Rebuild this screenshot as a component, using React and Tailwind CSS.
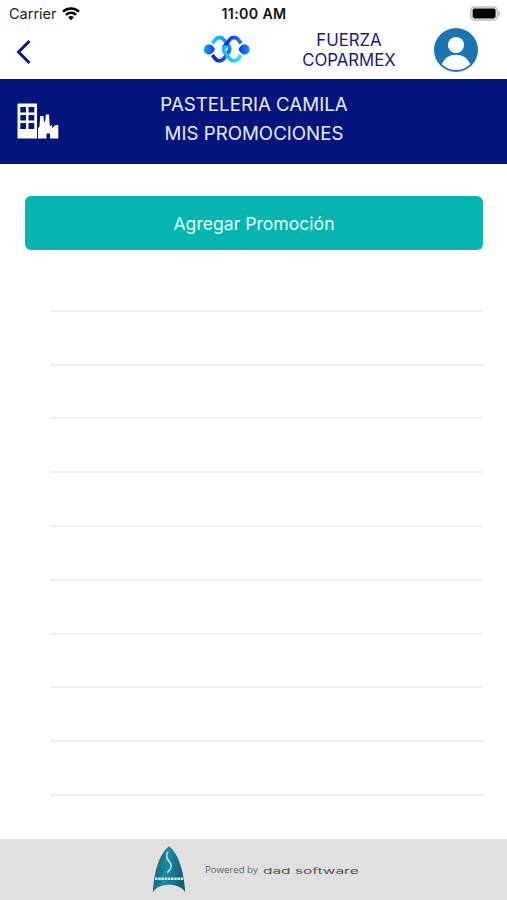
import React from 'react';

const rows = Array.from({ length: 10 }, (_, i) => i);

const WifiIcon = () => (
    <svg width="18" height="14" viewBox="0 0 18 14" fill="none" stroke="#000" strokeWidth="2.5">
        <path d="M1 4.7C5.6 0.5 12.4 0.5 17 4.7" />
        <path d="M3.9 7.9C6.8 5.1 11.2 5.1 14.1 7.9" />
        <path d="M9 13.2L6.1 10.2C7.8 8.6 10.2 8.6 11.9 10.2Z" fill="#000" stroke="none" />
    </svg>
);

const BatteryIcon = () => (
    <svg width="31" height="15" viewBox="0 0 31 15">
        <rect x="0.9" y="0.9" width="26.4" height="13.2" rx="3.8" fill="#fff" stroke="#bcbcbc" strokeWidth="1.5" />
        <rect x="2.6" y="2.6" width="23" height="9.8" rx="1.8" fill="#000" />
        <path d="M28.4 5.2C30.6 5.8 30.6 9.2 28.4 9.8Z" fill="#a8a8a8" />
    </svg>
);

const Logo = () => (
    <svg width="48" height="30" viewBox="0 0 48 30" fill="none" strokeWidth="3.7">
        <defs>
            <linearGradient id="arcTop" x1="0" y1="0" x2="1" y2="0">
                <stop offset="0" stopColor="#1cc8fb" />
                <stop offset="1" stopColor="#1687f5" />
            </linearGradient>
            <linearGradient id="arcBlue" x1="0" y1="0" x2="1" y2="0">
                <stop offset="0" stopColor="#1414d8" />
                <stop offset="1" stopColor="#1478f0" />
            </linearGradient>
            <linearGradient id="arcCyan" x1="0" y1="0" x2="1" y2="0">
                <stop offset="0" stopColor="#1cb6fa" />
                <stop offset="1" stopColor="#1fe6fb" />
            </linearGradient>
            <linearGradient id="dotLeft" x1="0" y1="0" x2="1" y2="0">
                <stop offset="0" stopColor="#10a8fa" />
                <stop offset="1" stopColor="#1438e0" />
            </linearGradient>
            <linearGradient id="dotRight" x1="0" y1="0" x2="1" y2="0">
                <stop offset="0" stopColor="#1230e0" />
                <stop offset="1" stopColor="#12a0fa" />
            </linearGradient>
        </defs>
        <path d="M9.5 8.3L12 4.8C14.5 1.6 18.5 1.6 21 4.8L26 11.2C27.8 13.8 26.5 17 23.5 17" stroke="url(#arcTop)" />
        <path d="M38 8.3L35.5 4.8C33 1.6 29 1.6 26.5 4.8L20.5 12.8" stroke="url(#arcBlue)" />
        <path d="M9.5 20L12 23.5C14.5 26.7 18.5 26.7 21 23.5L27 15.5" stroke="url(#arcBlue)" />
        <path d="M38 20L35.5 23.5C33 26.7 29 26.7 26.5 23.5L21.2 17C19.5 14.5 21 11.5 24 11.5" stroke="url(#arcCyan)" />
        <path d="M6 9.2C9 9.2 10.6 11.6 12 14.3C10.6 17 9 19.6 6 19.6A5.2 5.2 0 0 1 6 9.2Z" fill="url(#dotLeft)" />
        <path d="M41.5 9.2C38.5 9.2 36.9 11.6 35.5 14.3C36.9 17 38.5 19.6 41.5 19.6A5.2 5.2 0 0 0 41.5 9.2Z" fill="url(#dotRight)" />
    </svg>
);

const AvatarIcon = () => (
    <svg width="44" height="44" viewBox="0 0 44 44">
        <defs>
            <clipPath id="avatarClip">
                <circle cx="22" cy="22" r="20" />
            </clipPath>
        </defs>
        <circle cx="22" cy="22" r="22" fill="#1b75b5" />
        <circle cx="22" cy="17" r="8.1" fill="#fff" />
        <path d="M7.5 37C10 30 15.5 26.8 22 26.8S34 30 36.5 37C33 41 28 43 22 43S11 41 7.5 37Z" fill="#fff" clipPath="url(#avatarClip)" />
    </svg>
);

const CompanyIcon = () => (
    <svg width="42" height="36" viewBox="0 0 42 36" fill="#fff">
        <path
            fillRule="evenodd"
            d="M0.5 0.5H20V35.5H0.5ZM3.3 4V9.5H9V4ZM11.5 4V9.5H17.3V4ZM3.3 12V17.5H9V12ZM11.5 12V17.5H17.3V12ZM3.3 20V26H9V20ZM11.5 20V26H17.3V20Z"
        />
        <path d="M21 35.5V25L22.5 23.5L23.2 13H26.5L27 19.5L28.3 17.5L28.8 11.5H32L32.8 23.5L35 21.5V25L38.5 22H41.3V35.5H33V30.5H29.5V35.5Z" />
    </svg>
);

const FooterBadge = () => (
    <svg width="34" height="47" viewBox="0 0 34 46" preserveAspectRatio="none" fill="none">
        <defs>
            <linearGradient id="badge" x1="0" y1="0" x2="1" y2="0.2">
                <stop offset="0" stopColor="#0e5a72" />
                <stop offset="0.5" stopColor="#1b8ba2" />
                <stop offset="1" stopColor="#0f5f77" />
            </linearGradient>
        </defs>
        <path d="M17 0.3C26 7 32 24 33.3 45.5C28 35.5 6 35.5 0.9 45.5C2 24 8 7 17 0.3Z" fill="url(#badge)" />
        <path d="M16 5.5C11.5 13 19.8 15 19.2 20C18.7 23 16.8 25 15.3 26" stroke="#d8eff2" strokeWidth="1.4" />
        <path d="M3 32H31.3" stroke="#cfe6ea" strokeWidth="2.4" strokeDasharray="2.6 0.6" />
    </svg>
);

const App = () => {
    return (
        <div className="flex h-[900px] w-full flex-col overflow-hidden bg-white font-['Inter',sans-serif]">
            <header className="h-[79px] shrink-0">
                <div className="grid h-[27px] grid-cols-3 items-center pl-[9px] pr-[6px]">
                    <div className="flex items-center gap-[5px]">
                        <span className="text-[14.5px] text-[#222]">Carrier</span>
                        <WifiIcon />
                    </div>
                    <span className="-ml-[2px] text-center text-[14.2px] font-semibold tracking-[0.35px] text-[#111]">
                        11:00 AM
                    </span>
                    <div className="flex justify-end">
                        <BatteryIcon />
                    </div>
                </div>
                <div className="flex h-[45px] items-center pl-4">
                    <button className="mt-[5px] w-[187px]" aria-label="Regresar">
                        <svg width="15" height="24" viewBox="0 0 15 24" fill="none" stroke="#04107a" strokeWidth="2.8">
                            <path d="M13.5 1L2.5 12L13.5 23" />
                        </svg>
                    </button>
                    <Logo />
                    <h1 className="ml-[41px] w-[114px] text-center text-[16.8px] leading-5 text-[#1b1a78]">
                        FUERZA
                        <br />
                        COPARMEX
                    </h1>
                    <div className="ml-[28px]">
                        <AvatarIcon />
                    </div>
                </div>
            </header>

            <section className="grid h-[85px] shrink-0 grid-cols-[60px_1fr_76px] items-center bg-[#02157c] pl-[17px]">
                <div className="-mt-[2px]">
                    <CompanyIcon />
                </div>
                <div className="-mt-[5px] text-center text-[18.7px] leading-[29.5px] text-[#e9edff]">
                    <p>PASTELERIA CAMILA</p>
                    <p>MIS PROMOCIONES</p>
                </div>
            </section>

            <main className="flex-1 pl-[25px] pr-[24px] pt-[32px]">
                <button className="h-[54px] w-full rounded-md bg-[#06b5b0] pt-[2px] text-[17.6px] text-[#e2fffb]">
                    Agregar Promoción
                </button>
                <ul className="ml-[25px] mt-[8px]">
                    {rows.map((row) => (
                        <li key={row} className="h-[53.8px] border-b-2 border-[#f0f0f0]" />
                    ))}
                </ul>
            </main>

            <footer className="flex h-[61px] shrink-0 items-center bg-[#e0e0e0] pl-[152px]">
                <div className="-mt-px">
                    <FooterBadge />
                </div>
                <span className="ml-[19px] mt-[2px] w-[58px] whitespace-nowrap font-['Open_Sans',sans-serif] text-[9.6px] text-[#666]">
                    Powered by
                </span>
                <span className="mt-[2px] origin-left scale-x-[1.93] whitespace-nowrap text-[8px] text-[#555]">dad software</span>
            </footer>
        </div>
    );
};

export default App;
